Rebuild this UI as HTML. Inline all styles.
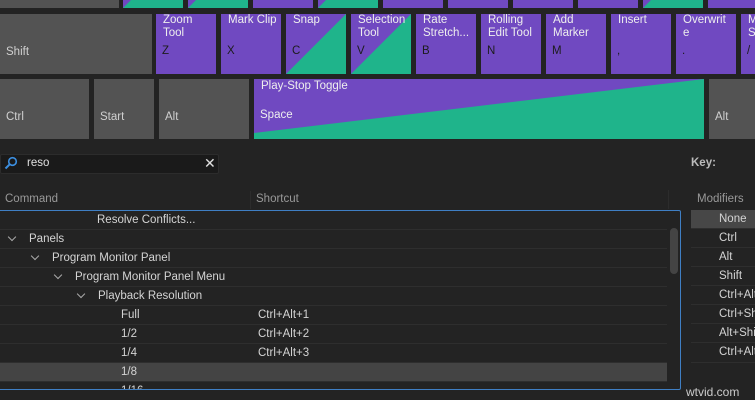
<!DOCTYPE html>
<html><head><meta charset="utf-8"><style>
*{margin:0;padding:0;box-sizing:border-box}
body{width:755px;height:400px;background:#232323;position:relative;overflow:hidden;font-family:"Liberation Sans","DejaVu Sans",sans-serif;font-size:11.5px;color:#d0d0d0}
.k{position:absolute;background:#7049c1;overflow:hidden}
.g{background:#535353}
.k svg{position:absolute;left:0;top:0;width:100%;height:100%}
.t{position:absolute;left:7px;top:0px;color:#eee;font-size:11.5px;line-height:13px;z-index:2}
.b{position:absolute;left:6px;top:31px;color:#1c1c1c;font-size:11.5px;z-index:2}
.g .b{color:#d0d0d0;top:auto;bottom:16px}
.row{position:absolute;left:1px;width:667px;height:19px;border-bottom:1px solid #2e2e2e;font-size:11.5px;line-height:18px;color:#d4d4d4}
.row span{position:absolute}
.chev{position:absolute;width:6px;height:6px;border-right:1px solid #aaa;border-bottom:1px solid #aaa;transform:rotate(45deg);top:4px}
.m{position:absolute;left:691px;width:70px;height:19px;border-bottom:1px solid #2e2e2e;padding-left:28px;line-height:18px;color:#d4d4d4}
</style></head><body>
<div class="k g" style="left:0;top:-52px;width:119px;height:60px"></div>
<div class="k" style="left:123px;top:-52px;width:60px;height:60px"><svg viewBox="0 0 60 60" preserveAspectRatio="none"><polygon points="0,60 60,0 60,60" fill="#1fb48b"/></svg></div>
<div class="k" style="left:188px;top:-52px;width:60px;height:60px"><svg viewBox="0 0 60 60" preserveAspectRatio="none"><polygon points="0,60 60,0 60,60" fill="#1fb48b"/></svg></div>
<div class="k" style="left:253px;top:-52px;width:60px;height:60px"></div>
<div class="k" style="left:318px;top:-52px;width:60px;height:60px"><svg viewBox="0 0 60 60" preserveAspectRatio="none"><polygon points="0,60 60,0 60,60" fill="#1fb48b"/></svg></div>
<div class="k" style="left:383px;top:-52px;width:60px;height:60px"></div>
<div class="k" style="left:448px;top:-52px;width:60px;height:60px"></div>
<div class="k" style="left:513px;top:-52px;width:60px;height:60px"></div>
<div class="k" style="left:578px;top:-52px;width:60px;height:60px"></div>
<div class="k" style="left:643px;top:-52px;width:60px;height:60px"><svg viewBox="0 0 60 60" preserveAspectRatio="none"><polygon points="0,60 60,0 60,60" fill="#1fb48b"/></svg></div>
<div class="k" style="left:708px;top:-52px;width:60px;height:60px"></div>
<div class="k g" style="left:0;top:14px;width:152px;height:60px"><div class="b">Shift</div></div>
<div class="k" style="left:156px;top:14px;width:60px;height:60px"><div class="t">Zoom<br>Tool</div><div class="b">Z</div></div>
<div class="k" style="left:221px;top:14px;width:60px;height:60px"><div class="t">Mark Clip</div><div class="b">X</div></div>
<div class="k" style="left:286px;top:14px;width:60px;height:60px"><svg viewBox="0 0 60 60" preserveAspectRatio="none"><polygon points="0,60 60,0 60,60" fill="#1fb48b"/></svg><div class="t">Snap</div><div class="b">C</div></div>
<div class="k" style="left:351px;top:14px;width:60px;height:60px"><svg viewBox="0 0 60 60" preserveAspectRatio="none"><polygon points="0,60 60,0 60,60" fill="#1fb48b"/></svg><div class="t">Selection<br>Tool</div><div class="b">V</div></div>
<div class="k" style="left:416px;top:14px;width:60px;height:60px"><div class="t">Rate<br>Stretch...</div><div class="b">B</div></div>
<div class="k" style="left:481px;top:14px;width:60px;height:60px"><div class="t">Rolling<br>Edit Tool</div><div class="b">N</div></div>
<div class="k" style="left:546px;top:14px;width:60px;height:60px"><div class="t">Add<br>Marker</div><div class="b">M</div></div>
<div class="k" style="left:611px;top:14px;width:60px;height:60px"><div class="t">Insert</div><div class="b">,</div></div>
<div class="k" style="left:676px;top:14px;width:60px;height:60px"><div class="t">Overwrit<br>e</div><div class="b">.</div></div>
<div class="k" style="left:741px;top:14px;width:60px;height:60px"><div class="t">M<br>S</div><div class="b">/</div></div>
<div class="k g" style="left:0;top:79px;width:89px;height:60px"><div class="b">Ctrl</div></div>
<div class="k g" style="left:94px;top:79px;width:60px;height:60px"><div class="b">Start</div></div>
<div class="k g" style="left:159px;top:79px;width:90px;height:60px"><div class="b">Alt</div></div>
<div class="k" style="left:254px;top:79px;width:450px;height:60px"><svg viewBox="0 0 450 60" preserveAspectRatio="none"><polygon points="0,54 450,0 450,60 0,60" fill="#1fb48b"/></svg><div class="t" style="top:1px">Play-Stop Toggle</div><div class="b" style="color:#eee;top:30px">Space</div></div>
<div class="k g" style="left:709px;top:79px;width:60px;height:60px"><div class="b">Alt</div></div>
<div style="position:absolute;left:0;top:154px;width:219px;height:20px;background:#1a1a1a;border:1px solid #2c2c2c;border-radius:2px"></div>
<svg style="position:absolute;left:4px;top:156px" width="14" height="14" viewBox="0 0 14 14"><circle cx="8.5" cy="5.5" r="3.8" fill="none" stroke="#3c8fe0" stroke-width="1.6"/><line x1="5.7" y1="8.3" x2="1.5" y2="12.5" stroke="#3c8fe0" stroke-width="2"/></svg>
<div style="position:absolute;left:27px;top:157px;color:#e0e0e0">reso</div>
<div style="position:absolute;left:204px;top:155px;color:#e0e0e0;font-size:14px">✕</div>
<div style="position:absolute;left:691px;top:157px;color:#bbb;font-weight:bold">Key:</div>
<div style="position:absolute;left:5px;top:193px;color:#999">Command</div>
<div style="position:absolute;left:250px;top:191px;width:1px;height:18px;background:#2c2c2c"></div>
<div style="position:absolute;left:256px;top:193px;color:#999">Shortcut</div>
<div style="position:absolute;left:668px;top:190px;width:1px;height:19px;background:#2c2c2c"></div>
<div style="position:absolute;left:697px;top:193px;color:#999">Modifiers</div>
<div style="position:absolute;left:-2px;top:210px;width:683px;height:180px;border:1px solid #3f7fc4;border-radius:2px;overflow:hidden">
<div class="row" style="top:0"><span style="left:97px">Resolve Conflicts...</span></div>
<div class="row" style="top:19px"><i class="chev" style="left:9px"></i><span style="left:29px">Panels</span></div>
<div class="row" style="top:38px"><i class="chev" style="left:32px"></i><span style="left:52px">Program Monitor Panel</span></div>
<div class="row" style="top:57px"><i class="chev" style="left:55px"></i><span style="left:75px">Program Monitor Panel Menu</span></div>
<div class="row" style="top:76px"><i class="chev" style="left:78px"></i><span style="left:98px">Playback Resolution</span></div>
<div class="row" style="top:95px"><span style="left:121px">Full</span><span style="left:258px">Ctrl+Alt+1</span></div>
<div class="row" style="top:114px"><span style="left:121px">1/2</span><span style="left:258px">Ctrl+Alt+2</span></div>
<div class="row" style="top:133px"><span style="left:121px">1/4</span><span style="left:258px">Ctrl+Alt+3</span></div>
<div class="row" style="top:152px;background:#444"><span style="left:121px">1/8</span></div>
<div class="row" style="top:171px"><span style="left:121px">1/16</span></div>
<div style="position:absolute;left:671px;top:17px;width:8px;height:46px;background:#444;border-radius:4px"></div>
</div>
<div class="m" style="top:210px;background:#474747">None</div>
<div class="m" style="top:229px">Ctrl</div>
<div class="m" style="top:248px">Alt</div>
<div class="m" style="top:267px">Shift</div>
<div class="m" style="top:286px">Ctrl+Alt</div>
<div class="m" style="top:305px">Ctrl+Shift</div>
<div class="m" style="top:324px">Alt+Shift</div>
<div class="m" style="top:343px;border-bottom:none">Ctrl+Alt</div>
<div style="position:absolute;left:691px;top:362px;width:64px;height:28px;border-top:1px solid #2e2e2e"></div>
<div style="position:absolute;left:686px;top:385px;color:#ccc;font-size:12px;font-family:'Liberation Sans',sans-serif">wtvid.com</div>
</body></html>
